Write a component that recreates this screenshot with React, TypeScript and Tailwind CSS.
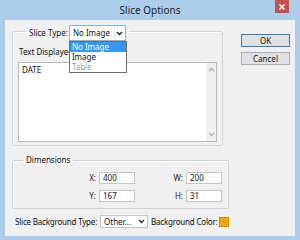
import React from 'react';

const Chevron = ({ className = '', up = false }: { className?: string; up?: boolean }) => (
  <svg width="7" height="5" viewBox="0 0 7 5" className={className}>
    <path
      d={up ? 'M1 4 L3.5 1.5 L6 4' : 'M1 1 L3.5 3.5 L6 1'}
      fill="none"
      stroke="currentColor"
      strokeWidth="1.4"
    />
  </svg>
);

const NumberField = ({ label, value, width }: { label: string; value: string; width: string }) => (
  <div className={`flex items-center justify-end gap-[3px] ${width}`}>
    <span className="text-[#222]">{label}</span>
    <div className="w-[36px] h-[12px] bg-white border border-[#c4c4c4] pl-[3px] leading-[10px]">{value}</div>
  </div>
);

export default function App() {
  return (
    <div className="w-[300px] h-[240px] bg-[#adcdec] flex flex-col text-[8px] text-[#111] font-['Noto_Sans',sans-serif]">
      {/* Title bar */}
      <div className="h-[20px] relative flex items-center justify-center">
        <span className="text-[10px] text-[#1a1a1a] leading-none">Slice Options</span>
        <div className="absolute right-[11px] top-0 w-[14px] h-[13px] bg-[#c75050] flex items-center justify-center">
          <svg width="6" height="6" viewBox="0 0 6 6">
            <path d="M0.5 0.5 L5.5 5.5 M5.5 0.5 L0.5 5.5" stroke="white" strokeWidth="1.5" />
          </svg>
        </div>
      </div>

      {/* Client area */}
      <div className="flex-1 mx-[5px] mb-[4px] bg-[#f0f0f0] flex flex-col">
        <div className="flex items-start pl-[7px] pt-[5px]">
          <fieldset className="w-[208px] h-[121px] border border-[#d3d3d3] rounded-[2px] px-[5px] shadow-[inset_1px_1px_0_#fff]">
            <legend className="ml-[8px] px-[3px] h-[12px] flex items-start gap-[1px]">
              <span className="mt-[3px] leading-[10px]">Slice Type:</span>
              <div className="relative w-[57px] h-[16px] border border-[#7eb4ea] bg-white flex items-center">
                <span className="flex-1 pl-[3px]">No Image</span>
                <div className="w-[11px] h-full border-l border-[#d9e6f3] flex items-center justify-center text-[#222]">
                  <Chevron />
                </div>
                {/* open dropdown list */}
                <div className="absolute left-[-1px] top-[15px] w-[58px] border border-[#6e6e6e] bg-white z-10 flex flex-col">
                  <div className="h-[10px] leading-[10px] pl-[2px] bg-[#3399ff] text-white">No Image</div>
                  <div className="h-[10px] leading-[10px] pl-[2px]">Image</div>
                  <div className="h-[10px] leading-[10px] pl-[2px] text-[#a0a0a0]">Table</div>
                </div>
              </div>
            </legend>
            <div className="mt-[10px] pl-[1px] leading-[10px] whitespace-nowrap">Text Displayed in Cell:</div>
            <div className="mt-[5px] h-[80px] w-[199px] border border-[#b9b9b9] bg-white flex">
              <div className="flex-1 pl-[3px] pt-[2px] leading-[10px]">DATE</div>
              <div className="w-[10px] bg-[#f0f0f0] flex flex-col justify-between items-center py-[4px] text-[#b0b0b0]">
                <Chevron up />
                <Chevron />
              </div>
            </div>
          </fieldset>

          <div className="ml-[18px] mt-[9px] flex flex-col gap-[5px]">
            <button className="w-[49px] h-[13px] bg-[#e1e1e1] border border-[#3c7fb1] shadow-[inset_0_0_0_1px_#cde4f7] leading-none">OK</button>
            <button className="w-[49px] h-[13px] bg-[#e1e1e1] border border-[#adadad] leading-none">Cancel</button>
          </div>
        </div>

        <fieldset className="ml-[7px] mt-[9px] w-[217px] h-[54px] border border-[#d3d3d3] rounded-[2px] shadow-[inset_1px_1px_0_#fff]">
          <legend className="ml-[10px] px-[3px] leading-[10px]">Dimensions</legend>
          <div className="mt-[7px] flex flex-col gap-[6px]">
            <div className="flex">
              <NumberField label="X:" value="400" width="w-[122px]" />
              <NumberField label="W:" value="200" width="w-[87px]" />
            </div>
            <div className="flex">
              <NumberField label="Y:" value="167" width="w-[122px]" />
              <NumberField label="H:" value="31" width="w-[87px]" />
            </div>
          </div>
        </fieldset>

        <div className="mt-[6px] pl-[10px] flex items-center h-[13px] whitespace-nowrap">
          <span className="w-[85px] shrink-0 tracking-[-0.2px]">Slice Background Type:</span>
          <div className="w-[48px] h-[13px] shrink-0 border border-[#c4c4c4] bg-white flex items-center">
            <span className="flex-1 pl-[3px]">Other...</span>
            <Chevron className="mr-[2px] text-[#333]" />
          </div>
          <span className="ml-[3px] w-[68px] shrink-0 tracking-[-0.2px]">Background Color:</span>
          <div className="w-[10px] h-[10px] shrink-0 bg-[#f9a602] border border-[#d08a00]" />
        </div>
      </div>
    </div>
  );
}
